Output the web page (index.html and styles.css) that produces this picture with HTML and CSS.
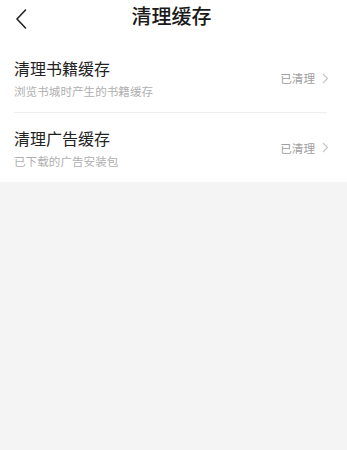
FILE: index.html
```html
<!DOCTYPE html>
<html lang="zh-CN">
  <head>
    <meta charset="UTF-8" />
    <meta name="viewport" content="width=device-width, initial-scale=1.0" />
    <title>清理缓存</title>
    <link rel="stylesheet" href="styles.css">
  </head>
  <body>
    <div class="page">
      <div class="header">
        <div class="back">
          <svg width="12" height="20" viewBox="0 0 12 20">
            <path d="M10.5 1 L2 10 L10.5 19" fill="none" stroke="#222" stroke-width="1.6" stroke-linecap="round" stroke-linejoin="round" />
          </svg>
        </div>
        <div class="title">清理缓存</div>
        <div></div>
      </div>

      <div class="list">
        <div class="item">
          <div class="info">
            <div class="item-title">清理书籍缓存</div>
            <div class="item-desc">浏览书城时产生的书籍缓存</div>
          </div>
          <div class="status">
            <span>已清理</span>
            <svg width="7" height="11" viewBox="0 0 7 11">
              <path d="M1 1 L5.5 5.5 L1 10" fill="none" stroke="#c6c6c6" stroke-width="1.2" />
            </svg>
          </div>
        </div>
        <div class="item">
          <div class="info">
            <div class="item-title">清理广告缓存</div>
            <div class="item-desc">已下载的广告安装包</div>
          </div>
          <div class="status">
            <span>已清理</span>
            <svg width="7" height="11" viewBox="0 0 7 11">
              <path d="M1 1 L5.5 5.5 L1 10" fill="none" stroke="#c6c6c6" stroke-width="1.2" />
            </svg>
          </div>
        </div>
      </div>
    </div>
  </body>
</html>
```

FILE: styles.css
```css
body {
  margin: 0;
  padding: 0;
  background-color: #f4f4f4;
  font-family: "Noto Sans CJK SC", "Noto Sans", sans-serif;
}

.page {
  background-color: white;
}

.header {
  display: grid;
  grid-template-columns: 44px 1fr 44px;
  height: 44px;
}

.back {
  padding: 9px 0 0 15px;
}

.back svg {
  display: block;
}

.title {
  text-align: center;
  font-size: 20px;
  line-height: 28px;
  font-weight: 500;
  color: #1a1a1a;
  padding-top: 2px;
  margin-left: -4px;
}

.list {
  padding: 0 20px 0 14px;
}

.item {
  display: flex;
  align-items: center;
  justify-content: space-between;
  height: 68px;
  border-bottom: 1px solid #eeeeee;
}

.item:last-child {
  border-bottom: none;
  height: 69px;
}

.item-title {
  font-size: 16px;
  line-height: 22px;
  color: #222;
}

.item-desc {
  font-size: 11.6px;
  line-height: 16px;
  margin-top: 4px;
  color: #b0b0b0;
}

.status {
  display: flex;
  align-items: center;
  gap: 7px;
  font-size: 11.6px;
  color: #a0a0a0;
  margin-right: -2px;
}

.status svg {
  display: block;
}
```
